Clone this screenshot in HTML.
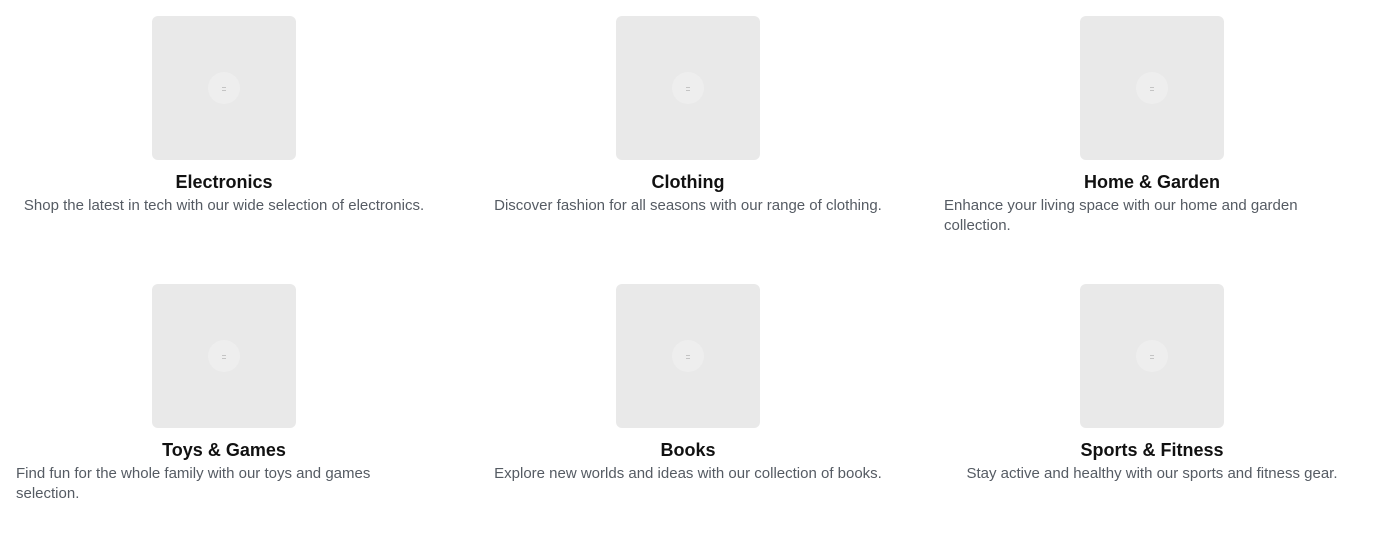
<!DOCTYPE html>
<html><head><meta charset="utf-8"><style>
body{margin:0;width:1376px;height:520px;background:#fff;font-family:"Liberation Sans",sans-serif;overflow:hidden}
.grid{display:grid;grid-template-columns:448px 448px 448px;column-gap:16px;row-gap:0}
.c{display:flex;flex-direction:column;align-items:center;height:268px;padding-top:16px;box-sizing:border-box}
.img{width:144px;height:144px;background:#e9e9e9;border-radius:6px;position:relative}
.img:after{content:"";position:absolute;left:56px;top:56px;width:32px;height:32px;border-radius:50%;background:#eeeeee}
.img:before{content:"";position:absolute;left:70px;top:71px;width:4px;height:2px;border-top:1px solid #c4c4c4;border-bottom:1px solid #c4c4c4;z-index:1}
h3{margin:10px 0 0;font-size:18px;font-weight:bold;color:#111;line-height:24px}
p{margin:2px 0 0;font-size:15px;color:#555b63;line-height:20px;text-align:left;padding:0 16px;white-space:nowrap}
</style></head><body><div class="grid">
<div class="c"><div class="img"></div><h3>Electronics</h3><p>Shop the latest in tech with our wide selection of electronics.</p></div>
<div class="c"><div class="img"></div><h3>Clothing</h3><p>Discover fashion for all seasons with our range of clothing.</p></div>
<div class="c"><div class="img"></div><h3>Home &amp; Garden</h3><p style="align-self:flex-start">Enhance your living space with our home and garden<br>collection.</p></div>
<div class="c"><div class="img"></div><h3>Toys &amp; Games</h3><p style="align-self:flex-start">Find fun for the whole family with our toys and games<br>selection.</p></div>
<div class="c"><div class="img"></div><h3>Books</h3><p>Explore new worlds and ideas with our collection of books.</p></div>
<div class="c"><div class="img"></div><h3>Sports &amp; Fitness</h3><p>Stay active and healthy with our sports and fitness gear.</p></div>
</div></body></html>
